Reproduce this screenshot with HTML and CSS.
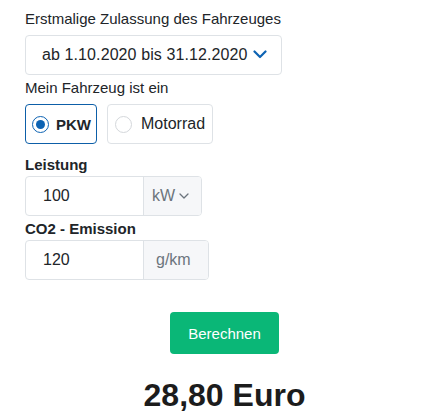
FILE: index.html
```html
<!DOCTYPE html>
<html lang="de">
<head>
<meta charset="utf-8">
<link rel="stylesheet" href="styles.css">
</head>
<body>
<form class="form">
  <div class="label label-first">Erstmalige Zulassung des Fahrzeuges</div>
  <div class="select">
    <span class="select-text">ab 1.10.2020 bis 31.12.2020</span>
    <svg class="chev" width="14" height="9" viewBox="0 0 14 9"><path d="M1.5 1.5 L7 7 L12.5 1.5" fill="none" stroke="#0d63b3" stroke-width="2.2" stroke-linecap="round" stroke-linejoin="round"/></svg>
  </div>
  <div class="label label-second">Mein Fahrzeug ist ein</div>
  <div class="radios">
    <div class="radio-box active">
      <span class="radio checked"></span>
      <span class="radio-text bold">PKW</span>
    </div>
    <div class="radio-box">
      <span class="radio"></span>
      <span class="radio-text">Motorrad</span>
    </div>
  </div>
  <div class="label label-bold label-leistung">Leistung</div>
  <div class="group">
    <span class="group-input">100</span>
    <span class="addon addon-kw">kW
      <svg class="chev-small" width="10" height="6" viewBox="0 0 10 6"><path d="M1 1 L5 5 L9 1" fill="none" stroke="#6c757d" stroke-width="1.3" stroke-linecap="round" stroke-linejoin="round"/></svg>
    </span>
  </div>
  <div class="label label-bold label-co2">CO2 - Emission</div>
  <div class="group">
    <span class="group-input">120</span>
    <span class="addon addon-gkm">g/km</span>
  </div>
  <div class="footer">
    <button type="button" class="btn">Berechnen</button>
    <div class="result">28,80 Euro</div>
  </div>
</form>
</body>
</html>
```
FILE: styles.css
```css
* { box-sizing: border-box; }
html, body { margin: 0; padding: 0; background: #fff; }
body {
  font-family: "Liberation Sans", Arial, sans-serif;
  color: #212529;
}
.form {
  padding: 9px 0 0 25px;
  display: flex;
  flex-direction: column;
  align-items: flex-start;
}
.label {
  font-size: 15px;
  line-height: 20px;
  color: #212529;
}
.label-bold { font-weight: bold; }
.select {
  margin-top: 6px;
  width: 257px;
  height: 40px;
  border: 1px solid #dee2e6;
  border-radius: 4px;
  display: flex;
  align-items: center;
  padding-left: 16px;
  font-size: 16px;
}
.select-text { letter-spacing: 0.1px; }
.chev { margin-left: 5px; margin-top: -1px; }
.label-second { margin-top: 3px; }
.radios {
  margin-top: 6px;
  display: flex;
  gap: 10px;
}
.radio-box {
  height: 40px;
  border: 1px solid #dee2e6;
  border-radius: 4px;
  display: flex;
  align-items: center;
  padding: 0 7px 0 7px;
  font-size: 16px;
  gap: 9px;
}
.radio-box.active {
  border-color: #0d5fa8;
  padding: 0 5px 0 6px;
  gap: 7px;
  font-size: 15px;
}
.radio {
  width: 17px;
  height: 17px;
  border-radius: 50%;
  border: 1px solid #d4d7db;
  display: flex;
  align-items: center;
  justify-content: center;
  flex-shrink: 0;
}
.radio.checked { border: 1.5px solid #0d63b3; }
.radio.checked::after {
  content: "";
  width: 9px;
  height: 9px;
  border-radius: 50%;
  background: #0d63b3;
}
.bold { font-weight: bold; }
.label-leistung { margin-top: 11px; }
.label-co2 { margin-top: 3px; }
.group {
  margin-top: 1px;
  height: 40px;
  display: flex;
  border: 1px solid #dee2e6;
  border-radius: 4px;
  font-size: 16px;
}
.group-input {
  width: 118px;
  display: flex;
  align-items: center;
  padding-left: 17px;
  border-right: 1px solid #dee2e6;
}
.addon {
  background: #f6f7f9;
  color: #6c757d;
  display: flex;
  align-items: center;
  border-radius: 0 3px 3px 0;
}
.addon-kw { width: 57px; padding-left: 8px; gap: 4px; }
.addon-gkm { width: 64px; padding-left: 12px; }
.footer {
  align-self: stretch;
  padding-left: 2px;
  display: flex;
  flex-direction: column;
  align-items: center;
}
.btn {
  margin-top: 32px;
  width: 109px;
  height: 42px;
  border: none;
  border-radius: 4px;
  background: #0ab777;
  color: #fff;
  font-family: "Liberation Sans", Arial, sans-serif;
  font-size: 15px;
}
.result {
  margin-top: 21px;
  font-size: 32px;
  line-height: 40px;
  font-weight: bold;
  color: #1c1c1c;
}
```
